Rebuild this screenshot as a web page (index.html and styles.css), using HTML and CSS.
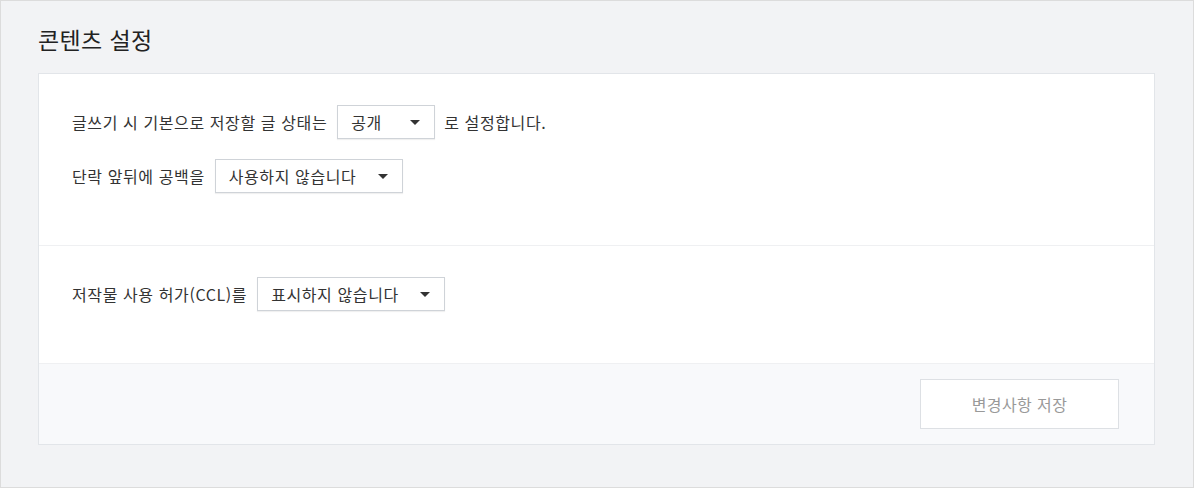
FILE: index.html
```html
<!DOCTYPE html>
<html lang="ko">
<head>
<meta charset="utf-8">
<title>콘텐츠 설정</title>
<link rel="stylesheet" href="styles.css">
</head>
<body>
<div class="page">
  <h1 class="title">콘텐츠 설정</h1>
  <div class="card">
    <div class="section">
      <div class="row">
        <span class="label">글쓰기 시 기본으로 저장할 글 상태는</span>
        <div class="select select-short"><span>공개</span><i class="arrow"></i></div>
        <span class="label">로 설정합니다.</span>
      </div>
      <div class="row">
        <span class="label">단락 앞뒤에 공백을</span>
        <div class="select select-long"><span>사용하지 않습니다</span><i class="arrow"></i></div>
      </div>
    </div>
    <div class="section">
      <div class="row">
        <span class="label">저작물 사용 허가(CCL)를</span>
        <div class="select select-long"><span>표시하지 않습니다</span><i class="arrow"></i></div>
      </div>
    </div>
    <div class="footer">
      <button class="save">변경사항 저장</button>
    </div>
  </div>
</div>
</body>
</html>
```
FILE: styles.css
```css
* { box-sizing: border-box; }
html, body { margin: 0; padding: 0; }
body {
  font-family: "Noto Sans CJK KR", "Noto Sans", sans-serif;
  color: #333;
}
.page {
  width: 1194px;
  height: 488px;
  border: 1px solid #dcdcdc;
  background: #f2f3f5;
  padding: 0 38px 0 37px;
}
.title {
  margin: 0;
  padding-top: 22px;
  height: 72px;
  font-size: 23px;
  line-height: 32px;
  font-weight: 400;
  color: #222;
  letter-spacing: 0.4px;
}
.card {
  background: #fff;
  border: 1px solid #e2e5e9;
}
.section {
  padding: 31px 32px 32px 33px;
  border-bottom: 1px solid #eff0f2;
}
.row {
  display: flex;
  align-items: center;
  gap: 9px;
  margin-bottom: 20px;
}
.label {
  font-size: 16px;
  color: #333;
  letter-spacing: 0.6px;
}
.select {
  height: 34px;
  margin-left: 1px;
  border: 1px solid #cfd3d8;
  box-shadow: 0 1px 1px rgba(0,0,0,0.06);
  background: #fff;
  display: flex;
  align-items: center;
  justify-content: space-between;
  padding: 0 14px 0 13px;
  font-size: 16px;
  color: #333;
  letter-spacing: 0.6px;
}
.select-short { width: 98px; }
.select-long { width: 188px; }
.arrow {
  width: 0;
  height: 0;
  border-left: 5px solid transparent;
  border-right: 5px solid transparent;
  border-top: 5px solid #333;
}
.footer {
  background: #f8f9fb;
  padding: 15px 35px 15px 0;
  display: flex;
  justify-content: flex-end;
}
.save {
  width: 199px;
  height: 50px;
  background: #fff;
  border: 1px solid #dde0e4;
  font-family: inherit;
  font-size: 16px;
  color: #999;
  letter-spacing: 0.4px;
}
```
